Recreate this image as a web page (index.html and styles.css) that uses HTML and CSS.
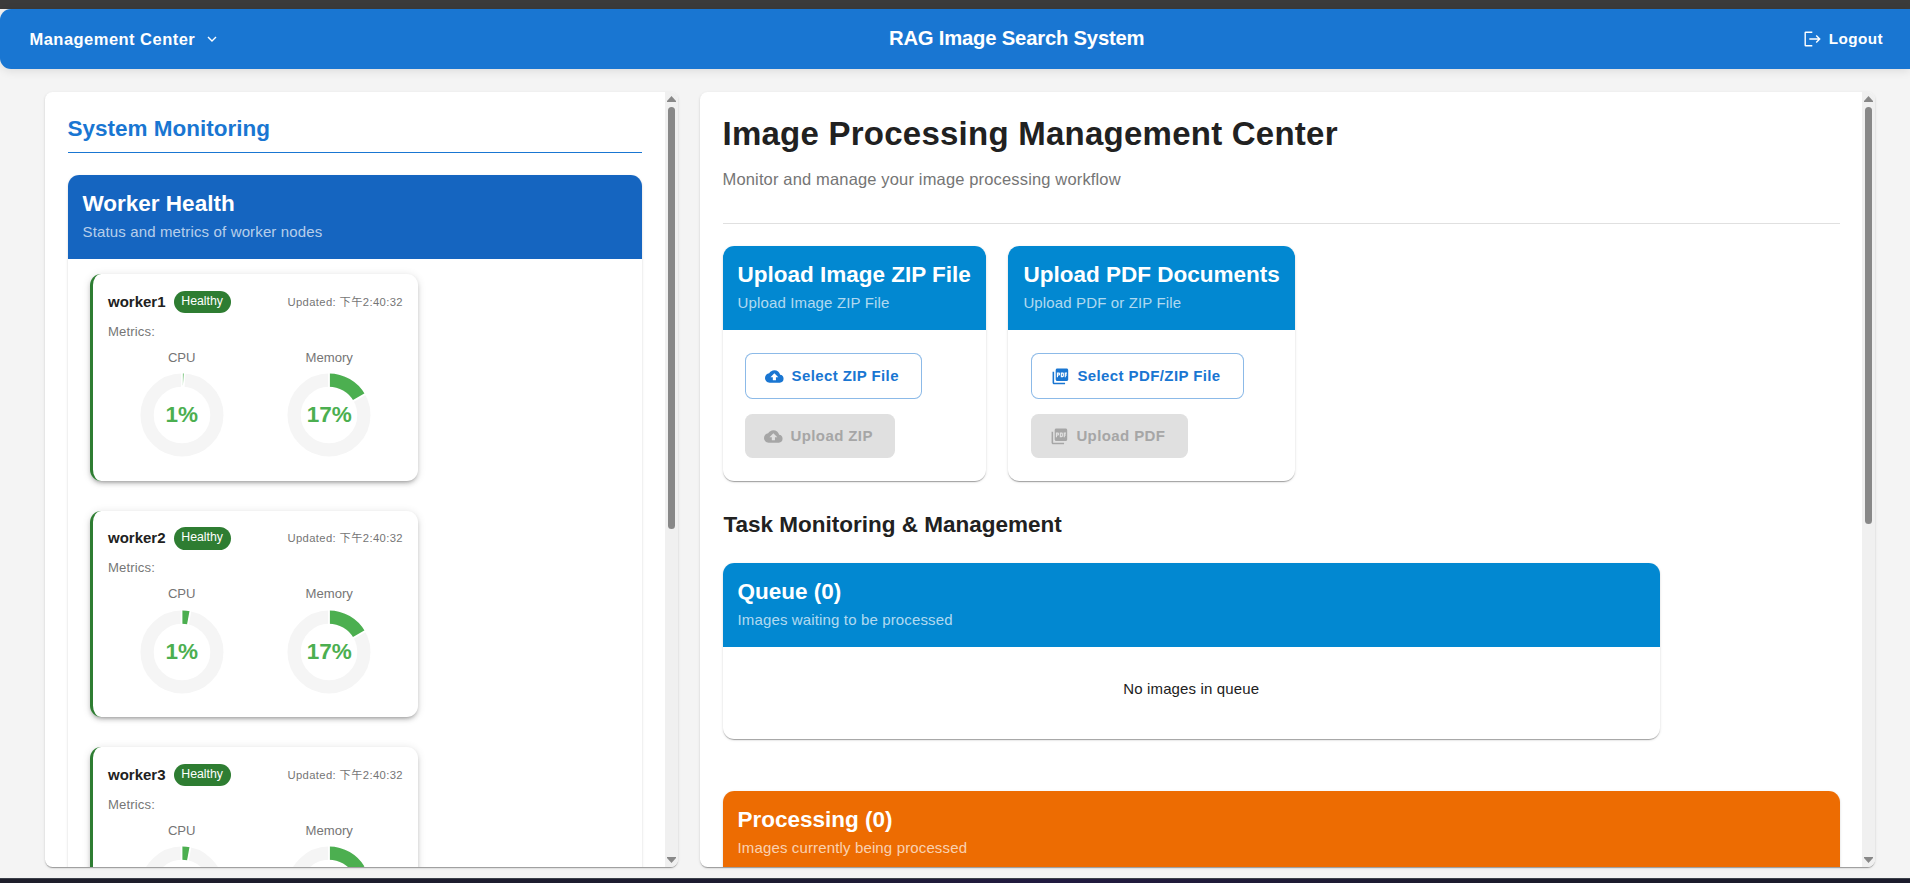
FILE: index.html
```html
<!DOCTYPE html>
<html lang="en">
<head>
<meta charset="utf-8">
<title>RAG Image Search System</title>
<link rel="stylesheet" href="styles.css">
</head>
<body>
<svg class="defs" aria-hidden="true">
  <symbol id="cloud" viewBox="0 0 24 24"><path fill="currentColor" d="M19.35 10.04C18.67 6.59 15.64 4 12 4 9.11 4 6.6 5.64 5.35 8.04 2.34 8.36 0 10.91 0 14c0 3.31 2.69 6 6 6h13c2.76 0 5-2.24 5-5 0-2.64-2.05-4.78-4.65-4.96M14 13v4h-4v-4H7l5-5 5 5z"/></symbol>
  <symbol id="pdf" viewBox="0 0 24 24"><path fill="currentColor" d="M20 2H8c-1.1 0-2 .9-2 2v12c0 1.1.9 2 2 2h12c1.1 0 2-.9 2-2V4c0-1.1-.9-2-2-2m-8.5 7.5c0 .83-.67 1.5-1.5 1.5H9v2H7.5V7H10c.83 0 1.5.67 1.5 1.5zm5 2c0 .83-.67 1.5-1.5 1.5h-2.5V7H15c.83 0 1.5.67 1.5 1.5zm4-3H19v1h1.5V11H19v2h-1.5V7h3zM9 9.5h1v-1H9zM4 6H2v14c0 1.1.9 2 2 2h14v-2H4zm10 5.5h1v-3h-1z"/></symbol>
  <symbol id="gauge-high" viewBox="0 0 84 84">
    <circle cx="42" cy="42" r="34.9" fill="none" stroke="#f5f5f5" stroke-width="13.2"/>
    <path d="M42 .5A41.5 41.5 0 0 1 77.94 21.25L66.5 27.85A28.3 28.3 0 0 0 42 13.7Z" fill="#4caf50"/>
    <path d="M42 14.5V0M66 28.1L79 20.6" stroke="#fff" stroke-width="1.8"/>
  </symbol>
  <symbol id="gauge-low" viewBox="0 0 84 84">
    <circle cx="42" cy="42" r="34.9" fill="none" stroke="#f5f5f5" stroke-width="13.2"/>
    <path d="M42 .5A41.5 41.5 0 0 1 50.2 1.3L47.6 14.3A28.3 28.3 0 0 0 42 13.7Z" fill="#4caf50"/>
    <path d="M41.5 14.5V0M47.9 14.8L50.6 0" stroke="#fff" stroke-width="1.8"/>
  </symbol>
  <symbol id="gauge-min" viewBox="0 0 84 84">
    <circle cx="42" cy="42" r="34.9" fill="none" stroke="#f5f5f5" stroke-width="13.2"/>
    <path d="M42 .5H44.4L43.6 13.7H42Z" fill="#4caf50"/>
    <path d="M42 14.5V0M43.7 14.5L44.6 0" stroke="#fff" stroke-width="1.8"/>
  </symbol>
</svg>

<div class="window-strip"></div>
<header class="topbar">
  <div class="menu">Management Center
    <svg class="chevron" viewBox="0 0 12 12"><path d="M2 4l4 4 4-4" fill="none" stroke="#fff" stroke-width="1.4"/></svg>
  </div>
  <div class="brand">RAG Image Search System</div>
  <div class="logout">
    <svg class="logout-icon" viewBox="0 0 17 16"><path d="M8.3 1.2H1.8q-.6 0-.6.6v12.4q0 .6.6.6h6.5M5.3 8h10.2M12.2 4.6L15.7 8l-3.5 3.4" fill="none" stroke="#fff" stroke-width="1.4"/></svg>
    Logout
  </div>
</header>

<main class="layout">
  <section class="panel side">
    <div class="content">
      <h2 class="section-title">System Monitoring</h2>
      <div class="card tall">
        <div class="card-head navy"><h3>Worker Health</h3><p>Status and metrics of worker nodes</p></div>
        <div class="workers">
          <article class="worker">
            <div class="worker-row"><b>worker1</b><span class="chip">Healthy</span><time>Updated: 下午2:40:32</time></div>
            <p class="metrics">Metrics:</p>
            <div class="gauges">
              <div class="gauge"><span>CPU</span><div class="ring"><svg><use href="#gauge-min"/></svg><strong>1%</strong></div></div>
              <div class="gauge"><span>Memory</span><div class="ring"><svg><use href="#gauge-high"/></svg><strong>17%</strong></div></div>
            </div>
          </article>
          <article class="worker">
            <div class="worker-row"><b>worker2</b><span class="chip">Healthy</span><time>Updated: 下午2:40:32</time></div>
            <p class="metrics">Metrics:</p>
            <div class="gauges">
              <div class="gauge"><span>CPU</span><div class="ring"><svg><use href="#gauge-low"/></svg><strong>1%</strong></div></div>
              <div class="gauge"><span>Memory</span><div class="ring"><svg><use href="#gauge-high"/></svg><strong>17%</strong></div></div>
            </div>
          </article>
          <article class="worker">
            <div class="worker-row"><b>worker3</b><span class="chip">Healthy</span><time>Updated: 下午2:40:32</time></div>
            <p class="metrics">Metrics:</p>
            <div class="gauges">
              <div class="gauge"><span>CPU</span><div class="ring"><svg><use href="#gauge-low"/></svg></div></div>
              <div class="gauge"><span>Memory</span><div class="ring"><svg><use href="#gauge-high"/></svg></div></div>
            </div>
          </article>
        </div>
      </div>
    </div>
    <div class="scrollbar">
      <svg class="arrow" viewBox="0 0 9 6"><path d="M4.5 0L9 5v1H0V5z" fill="#888"/></svg>
      <div class="track"><div class="thumb thumb-side"></div></div>
      <svg class="arrow" viewBox="0 0 9 6"><path d="M4.5 6L9 1V0H0v1z" fill="#888"/></svg>
    </div>
  </section>

  <section class="panel main">
    <div class="content">
      <h1>Image Processing Management Center</h1>
      <p class="lead">Monitor and manage your image processing workflow</p>
      <div class="uploads">
        <div class="card">
          <div class="card-head sky"><h3>Upload Image ZIP File</h3><p>Upload Image ZIP File</p></div>
          <div class="actions">
            <button class="btn outlined"><svg><use href="#cloud"/></svg>Select ZIP File</button>
            <button class="btn disabled"><svg><use href="#cloud"/></svg>Upload ZIP</button>
          </div>
        </div>
        <div class="card">
          <div class="card-head sky"><h3>Upload PDF Documents</h3><p>Upload PDF or ZIP File</p></div>
          <div class="actions">
            <button class="btn outlined"><svg><use href="#pdf"/></svg>Select PDF/ZIP File</button>
            <button class="btn disabled"><svg><use href="#pdf"/></svg>Upload PDF</button>
          </div>
        </div>
      </div>
      <h2 class="task-title">Task Monitoring &amp; Management</h2>
      <div class="card queue">
        <div class="card-head sky"><h3>Queue (0)</h3><p>Images waiting to be processed</p></div>
        <p class="empty">No images in queue</p>
      </div>
      <div class="card processing">
        <div class="card-head orange"><h3>Processing (0)</h3><p>Images currently being processed</p></div>
      </div>
    </div>
    <div class="scrollbar">
      <svg class="arrow" viewBox="0 0 9 6"><path d="M4.5 0L9 5v1H0V5z" fill="#888"/></svg>
      <div class="track"><div class="thumb thumb-main"></div></div>
      <svg class="arrow" viewBox="0 0 9 6"><path d="M4.5 6L9 1V0H0v1z" fill="#888"/></svg>
    </div>
  </section>
</main>
<div class="taskbar-strip"></div>
</body>
</html>
```
FILE: styles.css
```css
* { box-sizing: border-box; }
html, body { height: 100%; }
body {
  margin: 0;
  display: flex;
  flex-direction: column;
  overflow: hidden;
  background: #f4f4f4;
  color: #212121;
  font: 15px/1.5 "Liberation Sans", "Noto Sans CJK TC", sans-serif;
}
h1, h2, h3, p { margin: 0; }
.defs { display: none; }

.window-strip { flex: none; height: 9px; background: #3b3b3b; }
.taskbar-strip {
  flex: none;
  height: 5px;
  border-top: 1px solid #3c414a;
  background: linear-gradient(90deg, #1e1e2a, #1c1b30 40%, #211a40 55%, #1b1b2b 80%);
}

.topbar {
  flex: none;
  display: grid;
  grid-template-columns: 858.5px 1fr auto;
  align-items: center;
  height: 60px;
  padding: 0 27px 0 29.5px;
  border-radius: 11px 0 0 11px;
  background: #1976d2;
  box-shadow: 0 2px 10px rgba(0, 0, 0, .1);
  color: #fff;
  font-weight: 700;
}
.menu, .logout { display: flex; align-items: center; letter-spacing: .02857em; }
.menu { font-size: 16.5px; }
.chevron { width: 12px; height: 12px; margin-left: 10.5px; }
.brand { font-size: 20.25px; letter-spacing: -.2px; padding: 0 0 1px 1px; }
.logout { font-size: 15.25px; }
.logout-icon { width: 17px; height: 16px; margin-right: 8px; }

.layout { flex: 1; min-height: 0; display: flex; gap: 22px; padding: 23px 35px 11px 45px; }
.panel {
  display: flex;
  overflow: hidden;
  border-radius: 7.5px;
  background: #fff;
  box-shadow: 0 2px 1px -1px rgba(0, 0, 0, .2), 0 1px 1px rgba(0, 0, 0, .14), 0 1px 3px rgba(0, 0, 0, .12);
}
.side { width: 633px; flex: none; }
.side .content { padding-right: 23px; }
.main { flex: 1; }
.main .content { padding-right: 22px; }
.content { flex: 1; min-width: 0; overflow: hidden; padding: 22.5px; }

.scrollbar {
  flex: none;
  display: flex;
  flex-direction: column;
  align-items: center;
  width: 13px;
  padding: 4px 0;
  background: #f0f0f0;
}
.arrow { width: 9px; height: 6px; flex: none; }
.track { flex: 1; padding-top: 5px; }
.thumb { width: 7px; border-radius: 4px; background: #888; }
.thumb-side { height: 422px; }
.thumb-main { height: 417px; }

.section-title {
  padding-bottom: 10.5px;
  margin-bottom: 22px;
  border-bottom: 1px solid #1976d2;
  color: #1976d2;
  font-size: 22.5px;
  line-height: 27px;
}
.card {
  overflow: hidden;
  border-radius: 11.25px;
  background: #fff;
  box-shadow: 0 2px 1px -1px rgba(0, 0, 0, .2), 0 1px 1px rgba(0, 0, 0, .14), 0 1px 3px rgba(0, 0, 0, .12);
}
.card-head { height: 84px; padding: 15px; color: #fff; }
.card-head h3 { font-size: 22.5px; line-height: 27px; white-space: nowrap; }
.card-head p { margin-top: 3.75px; letter-spacing: .00938em; color: rgba(255, 255, 255, .7); }
.navy { background: #1565c0; }
.sky { background: #0288d1; }
.orange { background: #ed6c02; }

.tall { height: 1000px; }
.workers { display: flex; flex-direction: column; gap: 30px; padding: 15px 22.5px; }
.worker {
  width: 328px;
  height: 206.5px;
  padding: 15px;
  border-left: 3px solid #2e7d32;
  border-radius: 11.25px;
  box-shadow: 0 3px 3px -2px rgba(0, 0, 0, .2), 0 3px 4px rgba(0, 0, 0, .14), 0 1px 8px rgba(0, 0, 0, .12);
}
.worker-row { display: flex; align-items: center; height: 26px; }
.chip {
  height: 22.5px;
  margin-left: 8px;
  padding: 0 7.75px;
  border-radius: 12px;
  background: #2e7d32;
  color: #fff;
  font-size: 12.3px;
  line-height: 21px;
}
time { margin-left: auto; color: #757575; font-size: 11.25px; letter-spacing: .0333em; }
.metrics { margin-top: 7.5px; color: #757575; font-size: 13.125px; line-height: 18.75px; letter-spacing: .01071em; }
.gauges { display: grid; grid-template-columns: 1fr 1fr; margin-top: 7.5px; }
.gauge {
  display: flex;
  flex-direction: column;
  align-items: center;
  gap: 5.5px;
  color: #757575;
  font-size: 13.125px;
  line-height: 18.75px;
}
.ring { display: grid; width: 84px; height: 84px; }
.ring > * { grid-area: 1 / 1; }
.ring svg { width: 84px; height: 84px; }
.ring strong { place-self: center; color: #4caf50; font-size: 22.5px; line-height: 30px; }

h1 { font-size: 33px; line-height: 38.5px; letter-spacing: .00735em; }
.lead {
  height: 71px;
  padding-top: 14px;
  border-bottom: 1px solid #e0e0e0;
  color: #757575;
  font-size: 16.5px;
  line-height: 24.75px;
  letter-spacing: .00938em;
}
.uploads { display: flex; gap: 22.5px; margin-top: 22px; }
.actions { display: flex; flex-direction: column; align-items: flex-start; gap: 15px; padding: 22.5px 22.5px 23px; }
.btn {
  display: flex;
  align-items: center;
  border: 0;
  border-radius: 7.5px;
  font: 700 15px/1.5 "Liberation Sans", sans-serif;
  letter-spacing: .4px;
}
.btn svg { width: 18.75px; height: 18.75px; margin-right: 8px; }
.outlined { height: 46px; padding: 1px 22.5px 0 18.75px; border: 1px solid rgba(25, 118, 210, .5); background: #fff; color: #1976d2; }
.disabled { height: 44px; padding: 1px 22.5px 0 18.75px; background: #e0e0e0; color: #a6a6a6; }

.task-title { margin: 30.5px 0 25px 1px; font-size: 22.5px; line-height: 27px; }
.queue { width: 937.5px; height: 176px; }
.empty { padding-top: 31px; text-align: center; letter-spacing: .00938em; }
.processing { margin-top: 52px; height: 200px; }
```
